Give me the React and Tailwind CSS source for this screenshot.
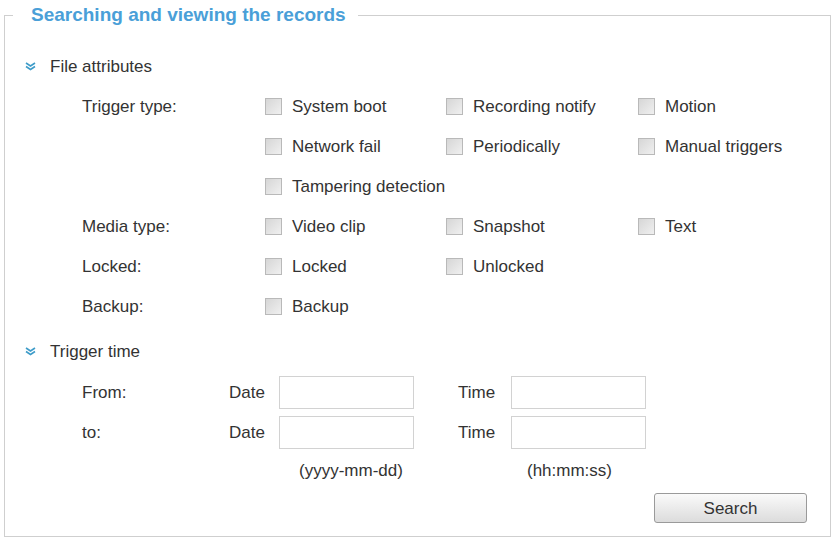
import React from "react";

function Chevrons() {
  return (
    <svg width="11" height="9" viewBox="0 0 11 9" className="block">
      <path d="M1 1 L5.5 4 L10 1" fill="none" stroke="#3e9cc9" strokeWidth="1.6" />
      <path d="M1 4.5 L5.5 7.5 L10 4.5" fill="none" stroke="#3e9cc9" strokeWidth="1.6" />
    </svg>
  );
}

function Box() {
  return (
    <span className="block w-[17px] h-[17px] border border-[#b9b9b9] bg-gradient-to-br from-[#d6d6d6] to-[#f0f0f0] shrink-0" />
  );
}

function Check({ label, w }) {
  return (
    <div className={`flex items-center gap-[10px] ${w}`}>
      <Box />
      <span>{label}</span>
    </div>
  );
}

function Row({ label, children }) {
  return (
    <div className="flex items-center h-[40px] pl-[77px]">
      <div className="w-[183px]">{label}</div>
      {children}
    </div>
  );
}

function Header({ text }) {
  return (
    <div className="flex items-center h-[40px] pl-[20px] gap-[14px]">
      <Chevrons />
      <span>{text}</span>
    </div>
  );
}

function Input() {
  return <div className="w-[135px] h-[33px] border border-[#d2d2d2] bg-white" />;
}

export default function App() {
  return (
    <div
      className="w-[834px] h-[540px] bg-white text-[#333] text-[17px] leading-none pl-[4px] pt-[4px]"
      style={{ fontFamily: '"Liberation Sans", Arial, sans-serif' }}
    >
      <fieldset className="w-[827px] h-[533px] border border-[#cfcfcf] p-0 m-0">
        <legend className="ml-[8px] pl-[18px] pr-[12px] text-[19px] leading-[22px] font-bold text-[#4a9fd8]">
          Searching and viewing the records
        </legend>
        <div className="pt-[20px]">
          <Header text="File attributes" />
          <Row label="Trigger type:">
            <Check label="System boot" w="w-[181px]" />
            <Check label="Recording notify" w="w-[192px]" />
            <Check label="Motion" w="" />
          </Row>
          <Row label="">
            <Check label="Network fail" w="w-[181px]" />
            <Check label="Periodically" w="w-[192px]" />
            <Check label="Manual triggers" w="" />
          </Row>
          <Row label="">
            <Check label="Tampering detection" w="" />
          </Row>
          <Row label="Media type:">
            <Check label="Video clip" w="w-[181px]" />
            <Check label="Snapshot" w="w-[192px]" />
            <Check label="Text" w="" />
          </Row>
          <Row label="Locked:">
            <Check label="Locked" w="w-[181px]" />
            <Check label="Unlocked" w="" />
          </Row>
          <Row label="Backup:">
            <Check label="Backup" w="" />
          </Row>
          <div className="h-[5px]" />
          <Header text="Trigger time" />
          <div className="flex flex-col gap-[7px] pl-[77px] pt-[5px]">
            <div className="flex items-center">
              <div className="w-[147px]">From:</div>
              <div className="w-[50px]">Date</div>
              <Input />
              <div className="w-[44px]" />
              <div className="w-[53px]">Time</div>
              <Input />
            </div>
            <div className="flex items-center">
              <div className="w-[147px]">to:</div>
              <div className="w-[50px]">Date</div>
              <Input />
              <div className="w-[44px]" />
              <div className="w-[53px]">Time</div>
              <Input />
            </div>
          </div>
          <div className="flex items-center h-[26px] mt-[8px] pl-[294px]">
            <div className="w-[228px]">(yyyy-mm-dd)</div>
            <div>(hh:mm:ss)</div>
          </div>
          <div className="flex pl-[649px] mt-[10px]">
            <button className="w-[153px] h-[30px] rounded-[3px] border border-[#9a9a9a] bg-gradient-to-b from-[#fafafa] to-[#dcdcdc] text-[#333] text-[17px]">
              Search
            </button>
          </div>
        </div>
      </fieldset>
    </div>
  );
}
